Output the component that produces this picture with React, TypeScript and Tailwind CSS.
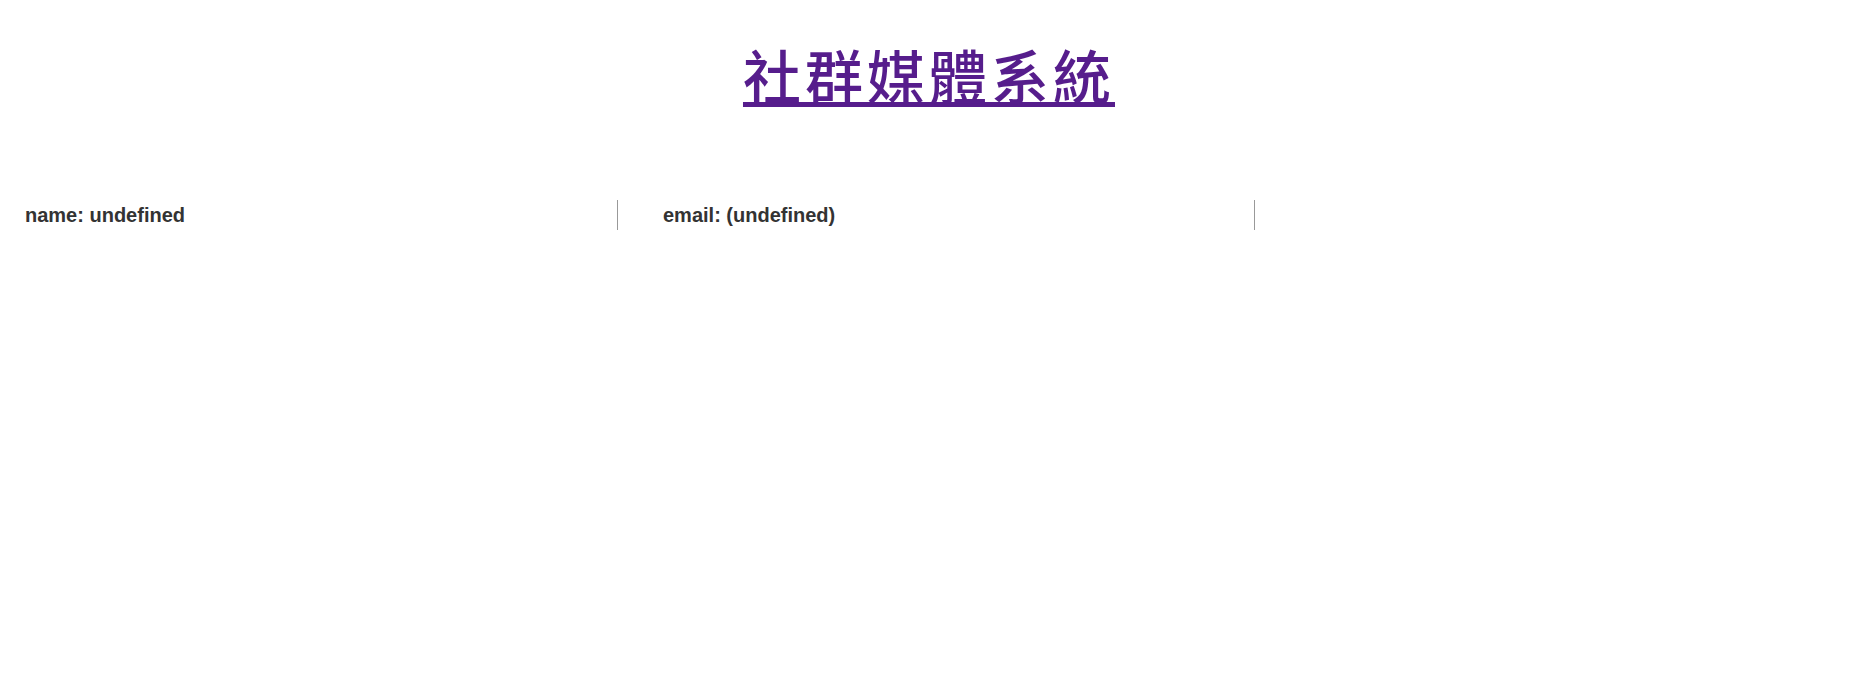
import React from 'react'

const Field: React.FC<{ label: string; className?: string }> = ({ label, className }) => {
    return (
        <div className={`h-[30px] flex items-center border-r border-[#999] ${className ?? ''}`}>
            <span className="text-[20px] font-bold text-[#333] leading-none">{label}</span>
        </div>
    )
}

const App: React.FC = () => {
    return (
        <div className="w-full min-h-screen bg-white font-['Liberation_Sans','Noto_Sans_CJK_TC',sans-serif]">
            {/* 標題 */}
            <div className="flex justify-center pt-[32px]">
                <h1 className="text-[58px] font-medium tracking-[4px] leading-[84px] text-[#561d8c] underline decoration-[5px] underline-offset-[3px] font-['Noto_Sans_CJK_TC','Noto_Sans_CJK_SC',sans-serif] -translate-x-[4px]">
                    社群媒體系統
                </h1>
            </div>

            {/* 使用者資訊 */}
            <div className="flex mt-[84px]">
                <Field label="name: undefined" className="w-[618px] pl-[25px]" />
                <Field label="email: (undefined)" className="w-[637px] pl-[45px]" />
            </div>
        </div>
    )
}

export default App
